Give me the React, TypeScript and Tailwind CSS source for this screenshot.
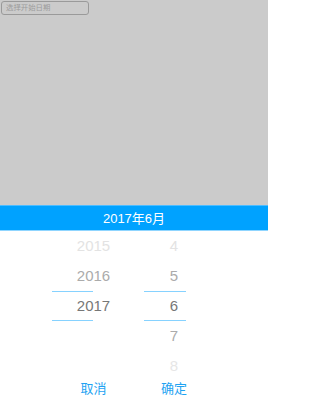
import React from "react";

const years = ["2015", "2016", "2017", "", ""];
const months = ["4", "5", "6", "7", "8"];
const tones = ["text-[#e3e3e3]", "text-[#ababab]", "text-[#777777]", "text-[#ababab]", "text-[#e6e6e6]"];

export default function App() {
  return (
    <div
      className="w-[268px] h-[406px] flex flex-col bg-white overflow-hidden"
      style={{ fontFamily: '"Liberation Sans", Arial, "Noto Sans CJK SC", sans-serif' }}
    >
      {/* page behind the picker */}
      <div className="h-[205px] bg-[#cbcbcb] p-[1px]">
        <div className="w-[88px] h-[14px] border border-[#9a9a9a] rounded-[3px] flex items-center pl-[4px]">
          <span className="text-[7.4px] leading-none text-[#9c9c9c]">选择开始日期</span>
        </div>
      </div>

      {/* header */}
      <div className="h-[26px] bg-[#00a2ff] border-t border-[#4dbcff] border-b border-b-[#8fd5ff] flex items-center justify-center">
        <span className="text-[13px] text-white leading-none">2017年6月</span>
      </div>

      {/* wheels */}
      <div className="relative flex h-[150px]">
        <div className="ml-[60px] w-[67px] flex flex-col">
          {years.map((y, i) => (
            <div key={i} className={`h-[30px] flex items-center justify-center text-[15px] ${tones[i]}`}>
              {y}
            </div>
          ))}
        </div>
        <div className="ml-[13px] w-[68px] flex flex-col">
          {months.map((m, i) => (
            <div key={i} className={`h-[30px] flex items-center justify-center text-[15px] ${tones[i]}`}>
              {m}
            </div>
          ))}
        </div>
        <div className="absolute left-[52px] top-[60px] w-[41px] h-[30px] border-y border-[#86d2ff]" />
        <div className="absolute left-[144px] top-[60px] w-[42px] h-[30px] border-y border-[#86d2ff]" />
      </div>

      {/* actions */}
      <div className="flex h-[14px] text-[13px] leading-none text-[#1fa3f2]">
        <div className="ml-[60px] w-[67px] flex items-center justify-center">取消</div>
        <div className="ml-[13px] w-[68px] flex items-center justify-center">确定</div>
      </div>
    </div>
  );
}
